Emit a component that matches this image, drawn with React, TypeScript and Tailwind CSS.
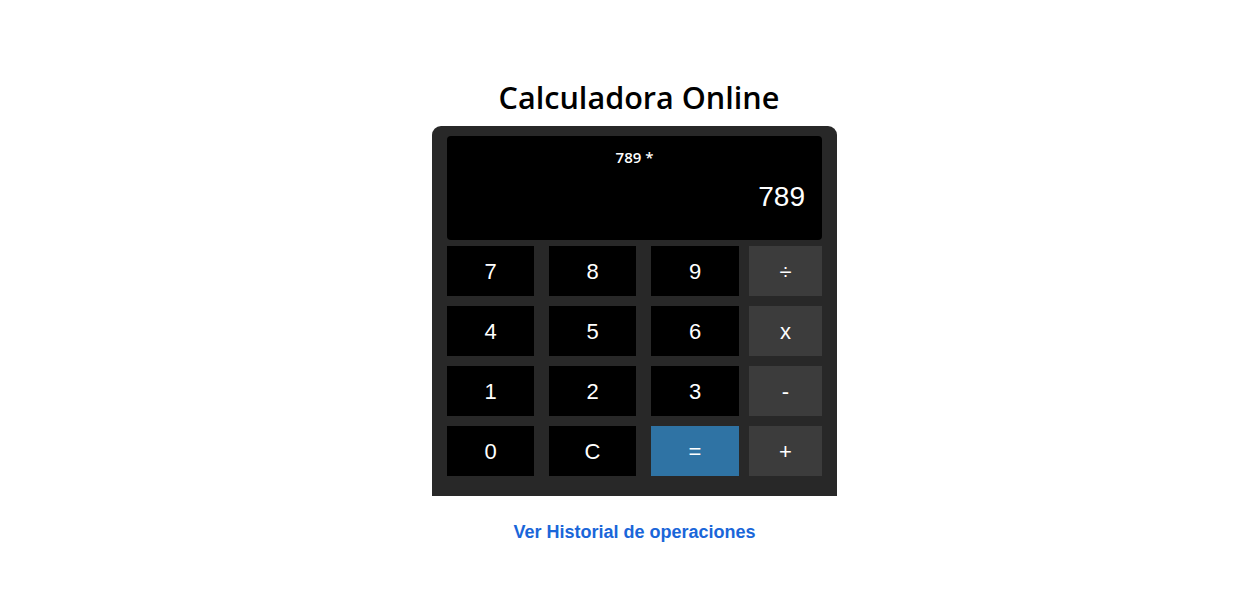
const Key = ({ label, className }: { label: string; className: string }) => (
  <button
    className={`h-[50px] text-[22px] text-white flex items-center justify-center ${className}`}
    style={{ fontFamily: '"Liberation Sans", Arial, sans-serif' }}
  >
    {label}
  </button>
);

const rows = [
  ["7", "8", "9", "÷"],
  ["4", "5", "6", "x"],
  ["1", "2", "3", "-"],
  ["0", "C", "=", "+"],
];

export default function App() {
  return (
    <div className="min-h-screen bg-white flex flex-col items-center pt-[78px] pl-[18px]">
      <h1
        className="text-[30.6px] font-semibold text-black leading-[38px] mb-[10px] ml-[9px]"
        style={{ fontFamily: '"Open Sans", "DejaVu Sans", sans-serif' }}
      >
        Calculadora Online
      </h1>

      <div className="w-[405px] bg-[#282828] rounded-t-[9px] px-[15px] pt-[10px] pb-[20px]">
        <div className="h-[104px] bg-black rounded-[4px] flex flex-col px-[17px] pt-[11px]">
          <div
            className="text-center text-white text-[15px] font-semibold leading-[20px]"
            style={{ fontFamily: '"Open Sans", "DejaVu Sans", sans-serif' }}
          >
            789 *
          </div>
          <div
            className="text-right text-white text-[28px] leading-[34px] mt-[13px]"
            style={{ fontFamily: '"Liberation Sans", Arial, sans-serif' }}
          >
            789
          </div>
        </div>

        <div className="mt-[6px] flex flex-col gap-[10px]">
          {rows.map((row, i) => (
            <div key={i} className="flex">
              <Key label={row[0]} className="w-[87px] bg-black" />
              <Key label={row[1]} className="w-[87px] ml-[15px] bg-black" />
              <Key
                label={row[2]}
                className={`w-[88px] ml-[15px] ${row[2] === "=" ? "bg-[#2f73a4]" : "bg-black"}`}
              />
              <Key label={row[3]} className="w-[73px] ml-[10px] bg-[#3c3c3c] text-[20px]" />
            </div>
          ))}
        </div>
      </div>

      <a
        href="#"
        className="mt-[23px] text-[18px] font-bold text-[#1a66d9]"
        style={{ fontFamily: '"Liberation Sans", Arial, sans-serif' }}
      >
        Ver Historial de operaciones
      </a>
    </div>
  );
}
